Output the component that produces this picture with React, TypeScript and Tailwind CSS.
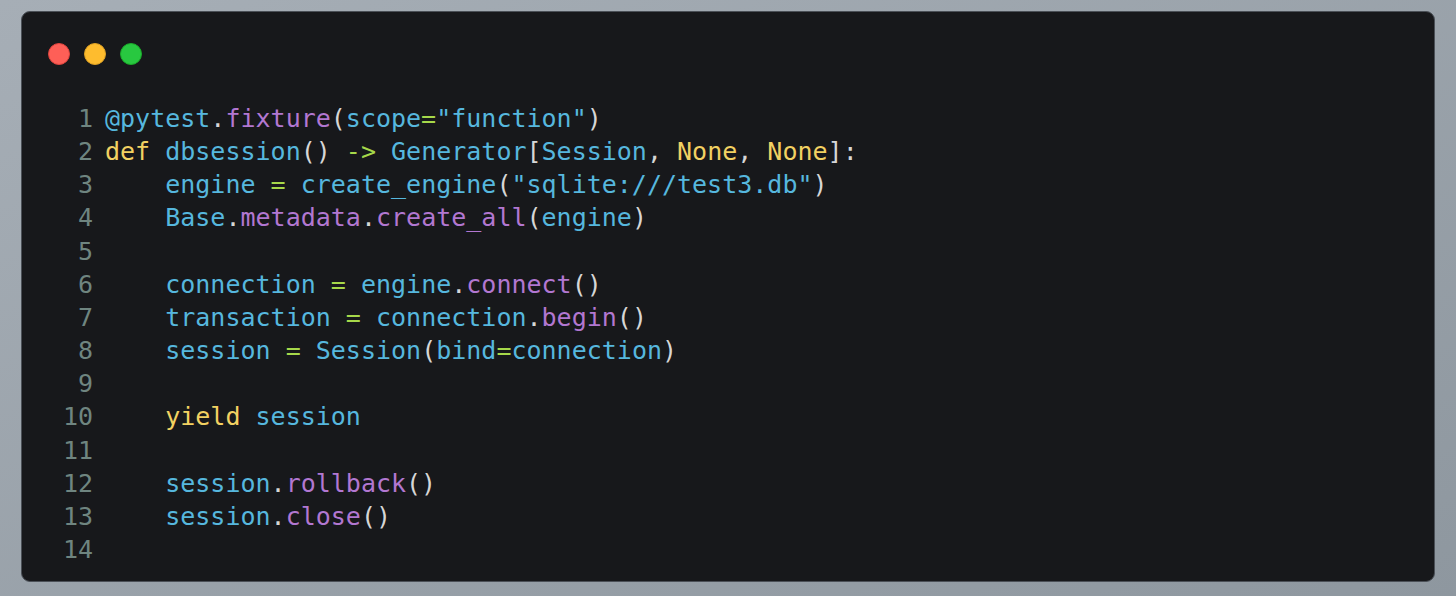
import React from "react";

type Tok = [string, string];

const C = "text-[#56b7de]";
const P = "text-[#b277d1]";
const Y = "text-[#f2d162]";
const G = "text-[#a6d84a]";
const W = "text-[#d6d6d6]";

const lines: Tok[][] = [
  [["@pytest", C], [".", W], ["fixture", P], ["(", W], ["scope", C], ["=", G], ['"function"', C], [")", W]],
  [["def", Y], [" ", W], ["dbsession", C], ["()", W], [" ", W], ["->", G], [" ", W], ["Generator", C], ["[", W], ["Session", C], [", ", W], ["None", Y], [", ", W], ["None", Y], ["]:", W]],
  [["    ", W], ["engine", C], [" ", W], ["=", G], [" ", W], ["create_engine", C], ["(", W], ['"sqlite:///test3.db"', C], [")", W]],
  [["    ", W], ["Base", C], [".", W], ["metadata", P], [".", W], ["create_all", P], ["(", W], ["engine", C], [")", W]],
  [],
  [["    ", W], ["connection", C], [" ", W], ["=", G], [" ", W], ["engine", C], [".", W], ["connect", P], ["()", W]],
  [["    ", W], ["transaction", C], [" ", W], ["=", G], [" ", W], ["connection", C], [".", W], ["begin", P], ["()", W]],
  [["    ", W], ["session", C], [" ", W], ["=", G], [" ", W], ["Session", C], ["(", W], ["bind", C], ["=", G], ["connection", C], [")", W]],
  [],
  [["    ", W], ["yield", Y], [" ", W], ["session", C]],
  [],
  [["    ", W], ["session", C], [".", W], ["rollback", P], ["()", W]],
  [["    ", W], ["session", C], [".", W], ["close", P], ["()", W]],
  [],
];

export default function App() {
  return (
    <div className="w-[1456px] h-[596px] bg-gradient-to-br from-[#a6aeb6] to-[#8e979f] pt-[11px] pl-[21px] overflow-hidden">
      <div className="w-[1414px] h-[571px] rounded-[9px] bg-[#17181b] border border-[#4b5057] pt-[31px] pl-[26px] flex flex-col">
        <div className="flex gap-[14px]">
          <div className="w-[22px] h-[22px] rounded-full bg-[#fe5f57] border border-[#e0443e]" />
          <div className="w-[22px] h-[22px] rounded-full bg-[#febc2e] border border-[#dea123]" />
          <div className="w-[22px] h-[22px] rounded-full bg-[#28c840] border border-[#1aab29]" />
        </div>
        <div
          className="mt-[37px] text-[25px] leading-[33.15px] whitespace-pre"
          style={{ fontFamily: '"DejaVu Sans Mono", "Liberation Mono", monospace' }}
        >
          {lines.map((toks, i) => (
            <div key={i} className="flex">
              <span className="w-[45px] text-right text-[#6f8580]">{i + 1}</span>
              <span className="ml-[12px]">
                {toks.map((t, j) => (
                  <span key={j} className={t[1]}>
                    {t[0]}
                  </span>
                ))}
              </span>
            </div>
          ))}
        </div>
      </div>
    </div>
  );
}
